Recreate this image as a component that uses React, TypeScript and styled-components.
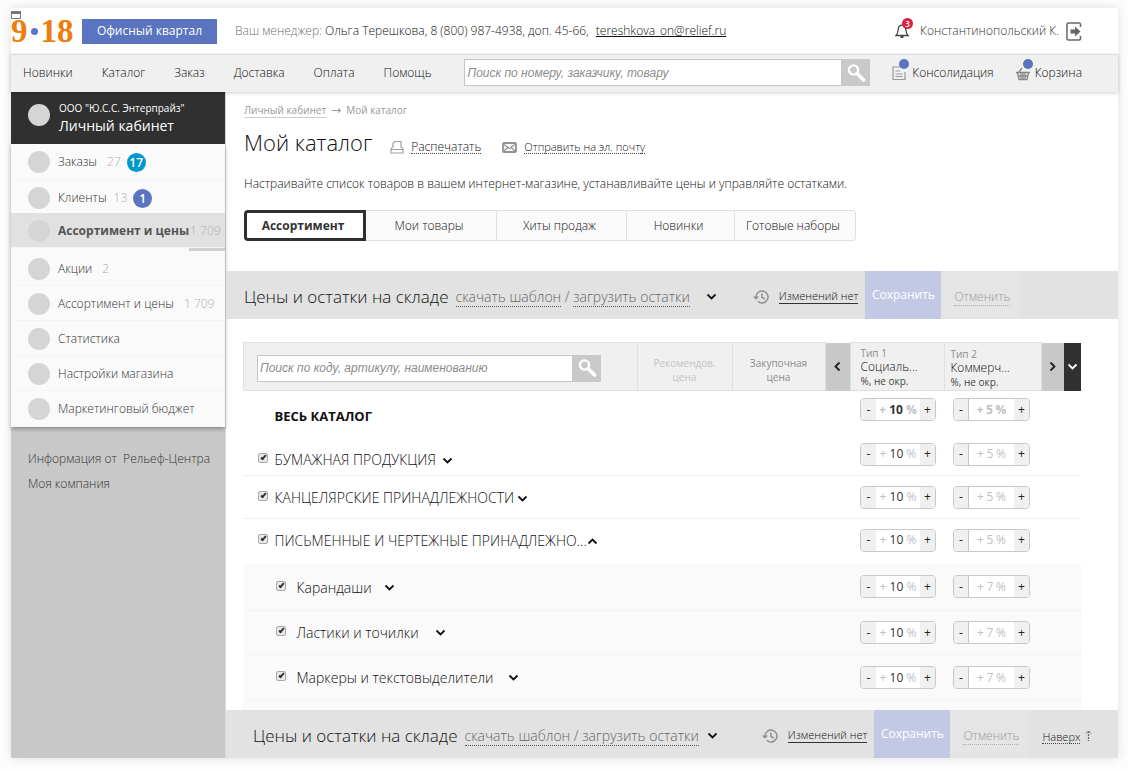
import React from 'react';
import styled, { createGlobalStyle, css } from 'styled-components';

const GlobalStyle = createGlobalStyle`
  *, *::before, *::after { box-sizing: border-box; }
  body {
    margin: 0;
    background: #fdfdfd;
    color: #111;
    font: 300 12px/16px "Open Sans", "Noto Sans", sans-serif;
  }
  button, input { font: inherit; color: inherit; margin: 0; padding: 0; }
  button { border: 0; background: none; cursor: pointer; }
  a { color: inherit; text-decoration: none; }
  h1, h2, p, ul { margin: 0; padding: 0; font-weight: inherit; list-style: none; }
`;

const Card = styled.div`
  margin: 8px 10px 12px 11px;
  background: #fff;
  box-shadow: 0 0 10px rgba(0, 0, 0, 0.12);
`;

/* ---------- header ---------- */

const Header = styled.header`
  display: flex;
  align-items: center;
  height: 46px;
  padding-right: 36px;
`;

const Logo = styled.a`
  position: relative;
  display: flex;
  align-items: center;
  gap: 3px;
  width: 71px;
  color: #ee7d0c;
  font: 700 33px/44px "Liberation Serif", serif;
`;

const LogoDot = styled.i`
  width: 7px;
  height: 7px;
  border-radius: 50%;
  background: #5f74c0;
`;

const WindowMark = styled.i`
  position: absolute;
  top: 2px;
  left: 0;
  width: 10px;
  height: 8px;
  border: 1px solid #777;
  border-top-width: 3px;
  background: #fff;
`;

const QuarterButton = styled.button`
  width: 135px;
  height: 25px;
  background: #5a74bf;
  color: #fff;
  font-weight: 400;
`;

const Manager = styled.p`
  flex: 1;
  margin-left: 18px;
  color: #707070;
`;

const Dark = styled.span`
  color: #111;
`;

const MailLink = styled.a`
  margin-left: 4px;
  color: #111;
  text-decoration: underline;
`;

const User = styled.div`
  display: flex;
  align-items: center;
  gap: 7px;
  color: #333;
`;

const BellButton = styled.button`
  position: relative;
  display: flex;
  width: 18px;
  height: 18px;
`;

const BellCount = styled.span`
  position: absolute;
  top: -4px;
  right: 0;
  width: 11px;
  height: 11px;
  border-radius: 50%;
  background: #dc1f3c;
  color: #fff;
  font-size: 8px;
  font-weight: 600;
  line-height: 11px;
  text-align: center;
`;

/* ---------- navigation ---------- */

const Nav = styled.nav`
  position: relative;
  display: flex;
  align-items: center;
  height: 38px;
  padding: 0 36px 2px 12px;
  border-top: 1px solid #ddd;
  background: #f0f0f0;
  box-shadow: 0 1px 4px rgba(0, 0, 0, 0.2);
`;

const NavList = styled.ul`
  display: flex;
  gap: 29px;
  margin-right: 33px;
`;

const SearchForm = styled.form`
  display: flex;
  flex: 1;
  height: 27px;
`;

const SearchInput = styled.input`
  flex: 1;
  min-width: 0;
  padding: 0 2px;
  border: 1px solid #c6c6c6;
  background: #fff;
  font: italic 12px/16px "Liberation Sans", sans-serif;
  outline: 0;
  &::placeholder { color: #8c8c8c; opacity: 1; }
`;

const SearchButton = styled.button`
  display: flex;
  align-items: center;
  justify-content: center;
  width: 28px;
  background: #c9c9c9;
`;

const NavAction = styled.a`
  position: relative;
  display: flex;
  align-items: center;
  gap: 5px;
  margin-left: 22px;
`;

const BlueDot = styled.i`
  position: absolute;
  top: -6px;
  left: 7px;
  width: 10px;
  height: 10px;
  border-radius: 50%;
  background: #5a74bf;
`;

/* ---------- sidebar ---------- */

const Body = styled.div`
  display: flex;
`;

const Sidebar = styled.aside`
  flex: none;
  width: 215px;
  border-right: 1px solid #d8d8d8;
  background: #c8c8c8;
`;

const Account = styled.div`
  display: flex;
  align-items: center;
  gap: 9px;
  height: 52px;
  padding: 0 0 2px 17px;
  background: #303030;
  color: #fff;
  font-weight: 400;
`;

const Company = styled.p`
  font-size: 10px;
  line-height: 16px;
`;

const Cabinet = styled.p`
  font-size: 14px;
  line-height: 19px;
`;

const Circle = styled.i`
  flex: none;
  width: 22px;
  height: 22px;
  border-radius: 50%;
  background: #d5d5d5;
`;

const AccountCircle = styled(Circle)`
  margin-bottom: 4px;
`;

const Menu = styled.ul`
  background: #fafafa;
  box-shadow: 0 2px 4px rgba(0, 0, 0, 0.3);
`;

const MenuLink = styled.a<{ $tall?: boolean; $active?: boolean }>`
  display: flex;
  align-items: center;
  height: ${(p) => (p.$tall ? 36 : 35)}px;
  padding: 1px 0 0 17px;
  border-bottom: 1px solid #f4f4f4;
  color: #333;
  white-space: nowrap;
  ${(p) =>
    p.$active &&
    css`
      position: relative;
      margin-top: -3px;
      background: #e1e1e1;
      color: #555;
      font-weight: 700;
    `}
`;

const MenuText = styled.span`
  margin-left: 8px;
`;

const Count = styled.span<{ $gap?: number }>`
  margin-left: ${(p) => p.$gap ?? 10}px;
  color: #b0b0b0;
  font-weight: 300;
`;

const Badge = styled.span<{ $color: string }>`
  width: 19px;
  height: 19px;
  margin-left: 6px;
  border-radius: 50%;
  background: ${(p) => p.$color};
  color: #fff;
  font-weight: 600;
  line-height: 19px;
  text-align: center;
`;

const Thumb = styled.div`
  width: 36px;
  height: 3px;
  margin-left: auto;
  background: #d0d0d0;
`;

const Info = styled.ul`
  display: grid;
  gap: 9px;
  padding: 24px 0 0 17px;
  color: #333;
  white-space: pre;
`;

/* ---------- main ---------- */

const Main = styled.main`
  flex: 1;
  min-width: 0;
`;

const Intro = styled.section`
  padding: 11px 18px 30px;
`;

const Crumbs = styled.p`
  display: flex;
  gap: 5px;
  color: #999;
  font-size: 10px;
  font-weight: 400;
  line-height: 14px;
`;

const CrumbLink = styled.a`
  border-bottom: 1px solid #ccc;
`;

const CrumbArrow = styled.span`
  font: 12px/14px "DejaVu Sans", sans-serif;
`;

const TitleRow = styled.div`
  display: flex;
  align-items: center;
  height: 44px;
  margin-top: 3px;
`;

const Title = styled.h1`
  margin: 0 18px 2px 0;
  font-size: 22px;
  line-height: 30px;
`;

const ToolLink = styled.a`
  display: flex;
  align-items: center;
  gap: 7px;
  margin: 8px 21px 0 0;
`;

const Dotted = styled.span<{ $small?: boolean }>`
  border-bottom: 1px dotted #444;
  font-size: ${(p) => (p.$small ? 11 : 12)}px;
  line-height: 13px;
`;

const Lead = styled.p`
  margin-top: 11px;
`;

const Tabs = styled.div`
  display: flex;
  width: fit-content;
  height: 31px;
  margin-top: 18px;
`;

const Tab = styled.button<{ $width: number; $active?: boolean }>`
  width: ${(p) => p.$width}px;
  padding-right: 4px;
  border: 1px solid #e0e0e0;
  border-left-width: 0;
  background: #fafafa;
  &:last-child { border-radius: 0 4px 4px 0; }
  ${(p) =>
    p.$active &&
    css`
      border: 3px solid #303030;
      border-radius: 4px 0 0 4px;
      background: #fff;
      color: #333;
      font-weight: 700;
    `}
`;

const Bar = styled.section<{ $shifted?: boolean }>`
  display: flex;
  align-items: center;
  height: 48px;
  padding-left: ${(p) => (p.$shifted ? 27 : 18)}px;
  background: #e2e2e2;
  white-space: nowrap;
`;

const BarInfo = styled.div`
  display: flex;
  align-items: center;
  padding-top: 3px;
`;

const BarTitle = styled.h2`
  margin-right: 7px;
  font-size: 17px;
  line-height: 24px;
`;

const BarLinks = styled.p<{ $shifted?: boolean }>`
  margin-right: ${(p) => (p.$shifted ? 8 : 16)}px;
  color: #666;
  font-size: 14px;
  line-height: 18px;
`;

const BarLink = styled.a`
  border-bottom: 1px dotted #555;
`;

const IconButton = styled.button`
  display: inline-flex;
  align-items: center;
  vertical-align: middle;
`;

const History = styled.a<{ $shifted?: boolean }>`
  display: flex;
  align-items: center;
  gap: 10px;
  margin-left: ${(p) => (p.$shifted ? 44 : 36)}px;
`;

const Underlined = styled.span`
  border-bottom: 1px solid #333;
  font-size: 11px;
  line-height: 14px;
`;

const Save = styled.button`
  align-self: stretch;
  width: 76px;
  margin-left: 7px;
  background: #c3c9e4;
  color: #fff;
  font-weight: 400;
`;

const Cancel = styled.button`
  align-self: stretch;
  width: 78px;
  padding: 4px 0 0 4px;
  background: #e5e5e5;
  color: #999;
`;

const CancelText = styled.span`
  border-bottom: 1px dotted #b0b0b0;
`;

const Up = styled.a`
  display: flex;
  gap: 5px;
  margin: 6px 0 0 14px;
`;

/* ---------- table ---------- */

const TableWrap = styled.div`
  padding: 23px 37px 0 17px;
`;

const Table = styled.table`
  width: 100%;
  border-collapse: collapse;
  table-layout: fixed;
`;

const HeadCell = styled.th<{ $muted?: boolean }>`
  height: 48px;
  padding: 6px 0 0;
  border: 1px solid #e0e0e0;
  background: #f0f0f0;
  color: ${(p) => (p.$muted ? '#c4c4c4' : '#8c8c8c')};
  font-size: 10px;
  font-weight: 400;
  line-height: 14px;
`;

const SearchCell = styled(HeadCell)`
  padding: 3px 36px 0 13px;
`;

const TypeCell = styled(HeadCell)<{ $low?: boolean }>`
  padding: ${(p) => (p.$low ? 4 : 3)}px 0 0 ${(p) => (p.$low ? 6 : 10)}px;
  text-align: left;
  vertical-align: top;
`;

const TypeName = styled.div`
  color: #111;
  font-size: 12px;
  font-weight: 300;
`;

const TypeUnit = styled.div`
  color: #444;
`;

const ArrowCell = styled.th<{ $dark?: boolean }>`
  padding: 0;
  background: ${(p) => (p.$dark ? '#303030' : '#c8c8c8')};
  color: ${(p) => (p.$dark ? '#fff' : '#222')};
  line-height: 0;
`;

const Row = styled.tr<{ $height: number; $line?: boolean; $sub?: boolean }>`
  height: ${(p) => p.$height}px;
  ${(p) => p.$line && css`border-bottom: 1px solid #efefef;`}
  ${(p) => p.$sub && css`background: #fafafa; border-bottom: 1px solid #f3f3f3;`}
`;

const NameCell = styled.td<{ $sub?: boolean; $drop: number }>`
  padding: ${(p) => p.$drop}px 0 0 ${(p) => (p.$sub ? 32 : 14)}px;
  font-size: 14px;
  line-height: 20px;
  white-space: nowrap;
`;

const NameLine = styled.div`
  display: flex;
  align-items: center;
`;

const CheckLabel = styled.label<{ $gap: number; $indent: number }>`
  display: flex;
  align-items: center;
  gap: ${(p) => p.$indent}px;
  margin-right: ${(p) => p.$gap}px;
`;

const AllLabel = styled.strong`
  margin-left: 17px;
  font-size: 13px;
  font-weight: 700;
`;

const Check = styled.input`
  position: relative;
  width: 10px;
  height: 10px;
  margin-bottom: 4px;
  border: 1px solid #a8a8a8;
  border-radius: 2px;
  background: #e8e8e8;
  appearance: none;
  &:checked::after {
    content: '';
    position: absolute;
    top: 0;
    left: 3px;
    width: 3px;
    height: 6px;
    border: solid #333;
    border-width: 0 2px 2px 0;
    transform: rotate(42deg);
  }
`;

const StepCell = styled.td<{ $pad: number; $lift: number }>`
  padding: 0 0 ${(p) => p.$lift}px ${(p) => p.$pad}px;
`;

const Stepper = styled.div<{ $split?: boolean; $bold?: boolean }>`
  display: flex;
  width: ${(p) => (p.$split ? 77 : 76)}px;
  height: 23px;
  overflow: hidden;
  border: 1px solid #c8c8c8;
  border-radius: 4px;
  background: #fff;
  color: #c0c0c0;
  font-weight: ${(p) => (p.$bold ? 700 : 400)};
`;

const StepButton = styled.button<{ $split?: boolean }>`
  width: 15px;
  background: #f0f0f0;
  color: #222;
  font-weight: 400;
  ${(p) => p.$split && css`border-right: 1px solid #c8c8c8;`}
`;

const StepValue = styled.label`
  display: flex;
  flex: 1;
  align-items: center;
  justify-content: center;
  gap: 2px;
`;

const StepInput = styled.input<{ $muted?: boolean }>`
  width: ${(p) => (p.$muted ? 8 : 16)}px;
  border: 0;
  background: none;
  color: ${(p) => (p.$muted ? '#c0c0c0' : '#333')};
  text-align: center;
  outline: 0;
`;

const Filler = styled.div`
  height: 9px;
  background: #fafafa;
`;

/* ---------- icons ---------- */

const turns = { down: 0, left: 90, up: 180, right: 270 };

const Chevron = ({ to = 'down' }: { to?: keyof typeof turns }) => (
  <svg width="11" height="11" viewBox="0 0 11 11" fill="none" stroke="currentColor" strokeWidth="1.8">
    <path d="M1.5 3.5 5.5 7.5 9.5 3.5" transform={`rotate(${turns[to]} 5.5 5.5)`} />
  </svg>
);

const Magnifier = () => (
  <svg width="20" height="20" viewBox="0 0 20 20" fill="none" stroke="#fff">
    <circle cx="7.5" cy="7" r="4.6" strokeWidth="2.4" />
    <path d="M11 10.5 17.5 17" strokeWidth="3.6" strokeLinecap="round" />
  </svg>
);

const Bell = () => (
  <svg width="15" height="17" viewBox="0 0 15 17" fill="none" stroke="#444" strokeWidth="1.3">
    <path d="M1 13.500h12c-1.800-1.600-2-3.200-2.200-6C10.600 4.800 9.200 3.200 7 3.200S3.400 4.800 3.200 7.500C3 10.300 2.800 11.900 1 13.500Z" />
    <path d="M5.500 15h3" strokeWidth="2" />
  </svg>
);

const Exit = () => (
  <svg width="16" height="19" viewBox="0 0 16 19">
    <path d="M14.500 5V2.500Q14.500 1 13 1H2.500Q1 1 1 2.500v14Q1 18 2.500 18H13q1.500 0 1.500-1.500V14" fill="none" stroke="#666" strokeWidth="1.500" />
    <path d="M4.500 7.500H9V4.500L14.500 9.500 9 14.500V11.500H4.500Z" fill="#666" />
  </svg>
);

const Sheet = () => (
  <svg width="15" height="16" viewBox="0 0 15 16" fill="none" stroke="#999" strokeWidth="1.200">
    <path d="M1 2h8M1 1.500v13h12V7M3.500 6H8M3.500 9h7M3.500 11.500h7" />
  </svg>
);

const Basket = () => (
  <svg width="14" height="16" viewBox="0 0 14 16" fill="none" stroke="#888" strokeWidth="1.300">
    <path d="M0 7.500h14M1.500 8l1.500 6.500h8L12.500 8M5 8v6M7 8v6M9 8v6M2.500 11h9M3 7l3-4" />
  </svg>
);

const Printer = () => (
  <svg width="14" height="14" viewBox="0 0 14 14" fill="none" stroke="#a0a0a0" strokeWidth="1.200">
    <path d="M3 7.500V3.500L5 1.500h6V7.500M3 6.500 1 9v4h12V9L11 6.500M1 9.500h12" />
  </svg>
);

const Envelope = () => (
  <svg width="15" height="11" viewBox="0 0 15 11" fill="none" stroke="#929292">
    <rect x="1" y="1" width="13" height="9" rx="1" strokeWidth="1.800" />
    <path d="M2 2.500 7.500 6.500 13 2.500M2 9 5.800 5.500M13 9 9.200 5.500" strokeWidth="1.300" />
  </svg>
);

const Clock = () => (
  <svg width="16" height="14" viewBox="0 0 16 14" fill="none" stroke="#909090" strokeWidth="1.500">
    <path d="M3 7a6 6 0 1 1 1.800 4.300M9 3.500V7.500l2.800 1.500" />
    <path d="M0 6.500h6L3 9.800Z" fill="#909090" stroke="none" />
  </svg>
);

const UpArrow = () => (
  <svg width="7" height="11" viewBox="0 0 7 11" fill="none" stroke="#666">
    <path d="M3.500 1v10" strokeDasharray="2 1" strokeWidth="1.300" />
    <path d="M1 3.500 3.500 1 6 3.500" />
  </svg>
);

/* ---------- parts ---------- */

const PriceBar = ({ shifted }: { shifted?: boolean }) => (
  <Bar $shifted={shifted}>
    <BarInfo>
      <BarTitle>Цены и остатки на складе</BarTitle>
      <BarLinks $shifted={shifted}>
        {shifted ? (
          <BarLink href="#stock">скачать шаблон / загрузить остатки</BarLink>
        ) : (
          <>
            <BarLink href="#template">скачать шаблон</BarLink> / <BarLink href="#stock">загрузить остатки</BarLink>
          </>
        )}
      </BarLinks>
      <IconButton aria-label="Развернуть"><Chevron /></IconButton>
      <History href="#history" $shifted={shifted}>
        <Clock />
        <Underlined>Изменений нет</Underlined>
      </History>
    </BarInfo>
    <Save>Сохранить</Save>
    <Cancel><CancelText>Отменить</CancelText></Cancel>
    {shifted && (
      <Up href="#top">
        <Dotted $small>Наверх</Dotted>
        <UpArrow />
      </Up>
    )}
  </Bar>
);

const PriceStepper = ({ value, label, muted, bold }: { value: string; label: string; muted?: boolean; bold?: boolean }) => (
  <Stepper $split={muted} $bold={bold}>
    <StepButton $split={muted} aria-label="Уменьшить">-</StepButton>
    <StepValue>
      +<StepInput aria-label={label} defaultValue={value} $muted={muted} />%
    </StepValue>
    <StepButton aria-label="Увеличить">+</StepButton>
  </Stepper>
);

type RowData = {
  name: string;
  height: number;
  second: string;
  lift?: number;
  drop?: number;
  gap?: number;
  all?: boolean;
  line?: boolean;
  sub?: boolean;
  open?: boolean;
};

const rows: RowData[] = [
  { name: 'ВЕСЬ КАТАЛОГ', height: 50, second: '5', lift: 12, all: true },
  { name: 'БУМАЖНАЯ ПРОДУКЦИЯ', height: 35, second: '5', lift: 7, drop: 5, gap: 6, line: true },
  { name: 'КАНЦЕЛЯРСКИЕ ПРИНАДЛЕЖНОСТИ', height: 43, second: '5', drop: 2, gap: 3, line: true },
  { name: 'ПИСЬМЕННЫЕ И ЧЕРТЕЖНЫЕ ПРИНАДЛЕЖНО...', height: 45, second: '5', lift: 2, gap: 0, open: true },
  { name: 'Карандаши', height: 47, second: '7', drop: 2, gap: 12, sub: true },
  { name: 'Ластики и точилки', height: 44, second: '7', gap: 16, sub: true },
  { name: 'Маркеры и текстовыделители', height: 46, second: '7', gap: 15, sub: true },
];

const CatalogRow = ({ row }: { row: RowData }) => (
  <Row $height={row.height} $line={row.line} $sub={row.sub}>
    <NameCell $sub={row.sub} $drop={row.drop ?? 0} colSpan={4}>
      <NameLine>
        {row.all ? (
          <AllLabel>{row.name}</AllLabel>
        ) : (
          <>
            <CheckLabel $gap={row.gap ?? 0} $indent={row.sub ? 11 : 7}>
              <Check type="checkbox" defaultChecked />
              {row.name}
            </CheckLabel>
            <IconButton aria-label="Раздел"><Chevron to={row.open ? 'up' : 'down'} /></IconButton>
          </>
        )}
      </NameLine>
    </NameCell>
    <StepCell $pad={10} $lift={row.lift ?? 0}>
      <PriceStepper value="10" label={row.name} bold={row.all} />
    </StepCell>
    <StepCell $pad={9} $lift={row.lift ?? 0}>
      <PriceStepper value={row.second} label={row.name} bold={row.all} muted />
    </StepCell>
    <td colSpan={2} />
  </Row>
);

export default function App() {
  return (
    <>
      <GlobalStyle />
      <Card>
        <Header>
          <Logo href="#home">
            <WindowMark />
            <span>9</span><LogoDot /><span>18</span>
          </Logo>
          <QuarterButton>Офисный квартал</QuarterButton>
          <Manager>
            Ваш менеджер: <Dark>Ольга Терешкова, 8 (800) 987-4938, доп. 45-66,</Dark>{' '}
            <MailLink href="mailto:tereshkova_on@relief.ru">tereshkova_on@relief.ru</MailLink>
          </Manager>
          <User>
            <BellButton aria-label="Уведомления">
              <Bell />
              <BellCount>3</BellCount>
            </BellButton>
            <span>Константинопольский К.</span>
            <IconButton aria-label="Выйти"><Exit /></IconButton>
          </User>
        </Header>

        <Nav>
          <NavList>
            {['Новинки', 'Каталог', 'Заказ', 'Доставка', 'Оплата', 'Помощь'].map((item) => (
              <li key={item}><a href="#nav">{item}</a></li>
            ))}
          </NavList>
          <SearchForm>
            <SearchInput aria-label="Поиск" placeholder="Поиск по номеру, заказчику, товару" />
            <SearchButton type="button" aria-label="Найти"><Magnifier /></SearchButton>
          </SearchForm>
          <NavAction href="#consolidation"><Sheet /><BlueDot />Консолидация</NavAction>
          <NavAction href="#cart"><Basket /><BlueDot />Корзина</NavAction>
        </Nav>

        <Body>
          <Sidebar>
            <Account>
              <AccountCircle />
              <div>
                <Company>ООО "Ю.С.С. Энтерпрайз"</Company>
                <Cabinet>Личный кабинет</Cabinet>
              </div>
            </Account>
            <Menu>
              <li><MenuLink href="#orders" $tall><Circle /><MenuText>Заказы</MenuText><Count>27</Count><Badge $color="#0097cc">17</Badge></MenuLink></li>
              <li><MenuLink href="#clients" $tall><Circle /><MenuText>Клиенты</MenuText><Count $gap={7}>13</Count><Badge $color="#5a74bf">1</Badge></MenuLink></li>
              <li><MenuLink href="#prices" $active><Circle /><MenuText>Ассортимент и цены</MenuText><Count $gap={1}>1 709</Count></MenuLink></li>
              <li><Thumb /></li>
              <li><MenuLink href="#promo"><Circle /><MenuText>Акции</MenuText><Count>2</Count></MenuLink></li>
              <li><MenuLink href="#goods"><Circle /><MenuText>Ассортимент и цены</MenuText><Count>1 709</Count></MenuLink></li>
              <li><MenuLink href="#stats"><Circle /><MenuText>Статистика</MenuText></MenuLink></li>
              <li><MenuLink href="#settings"><Circle /><MenuText>Настройки магазина</MenuText></MenuLink></li>
              <li><MenuLink href="#budget" $tall><Circle /><MenuText>Маркетинговый бюджет</MenuText></MenuLink></li>
            </Menu>
            <Info>
              <li><a href="#info">Информация от  Рельеф-Центра</a></li>
              <li><a href="#company">Моя компания</a></li>
            </Info>
          </Sidebar>

          <Main>
            <Intro>
              <Crumbs>
                <CrumbLink href="#cabinet">Личный кабинет</CrumbLink>
                <CrumbArrow>→</CrumbArrow>
                <span>Мой каталог</span>
              </Crumbs>
              <TitleRow>
                <Title>Мой каталог</Title>
                <ToolLink href="#print"><Printer /><Dotted>Распечатать</Dotted></ToolLink>
                <ToolLink href="#mail"><Envelope /><Dotted $small>Отправить на эл. почту</Dotted></ToolLink>
              </TitleRow>
              <Lead>Настраивайте список товаров в вашем интернет-магазине, устанавливайте цены и управляйте остатками.</Lead>
              <Tabs>
                <Tab $width={122} $active>Ассортимент</Tab>
                <Tab $width={131}>Мои товары</Tab>
                <Tab $width={130}>Хиты продаж</Tab>
                <Tab $width={108}>Новинки</Tab>
                <Tab $width={121}>Готовые наборы</Tab>
              </Tabs>
            </Intro>

            <PriceBar />

            <TableWrap>
              <Table>
                <colgroup>
                  <col />
                  <col width="95" />
                  <col width="93" />
                  <col width="25" />
                  <col width="94" />
                  <col width="97" />
                  <col width="23" />
                  <col width="17" />
                </colgroup>
                <thead>
                  <tr>
                    <SearchCell>
                      <SearchForm>
                        <SearchInput aria-label="Поиск по каталогу" placeholder="Поиск по коду, артикулу, наименованию" />
                        <SearchButton type="button" aria-label="Найти"><Magnifier /></SearchButton>
                      </SearchForm>
                    </SearchCell>
                    <HeadCell $muted>Рекомендов.<br />цена</HeadCell>
                    <HeadCell>Закупочная<br />цена</HeadCell>
                    <ArrowCell><IconButton aria-label="Назад"><Chevron to="left" /></IconButton></ArrowCell>
                    <TypeCell>Тип 1<TypeName>Социаль...</TypeName><TypeUnit>%, не окр.</TypeUnit></TypeCell>
                    <TypeCell $low>Тип 2<TypeName>Коммерч...</TypeName><TypeUnit>%, не окр.</TypeUnit></TypeCell>
                    <ArrowCell><IconButton aria-label="Вперёд"><Chevron to="right" /></IconButton></ArrowCell>
                    <ArrowCell $dark><IconButton aria-label="Столбцы"><Chevron /></IconButton></ArrowCell>
                  </tr>
                </thead>
                <tbody>
                  {rows.map((row) => <CatalogRow key={row.name} row={row} />)}
                </tbody>
              </Table>
              <Filler />
            </TableWrap>

            <PriceBar shifted />
          </Main>
        </Body>
      </Card>
    </>
  );
}
